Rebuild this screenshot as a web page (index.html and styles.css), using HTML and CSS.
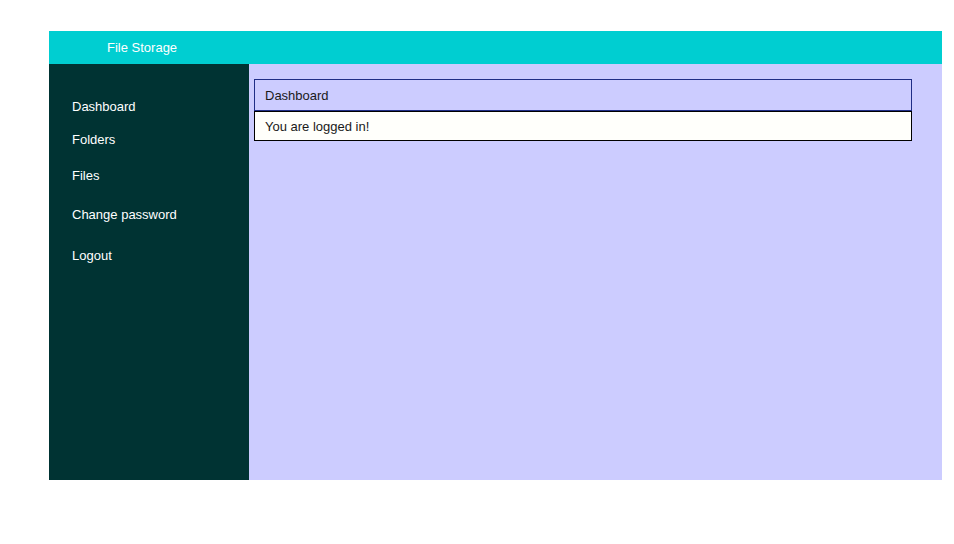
FILE: index.html
```html
<!DOCTYPE html>
<html lang="en">
<head>
<meta charset="utf-8">
<title>File Storage</title>
<link rel="stylesheet" href="styles.css">
</head>
<body>
<div class="app">
  <header class="topbar">File Storage</header>
  <div class="layout">
    <nav class="sidebar">
      <a class="nav-item" href="#">Dashboard</a>
      <a class="nav-item" href="#">Folders</a>
      <a class="nav-item" href="#">Files</a>
      <a class="nav-item" href="#">Change password</a>
      <a class="nav-item" href="#">Logout</a>
    </nav>
    <main class="content">
      <section class="card">
        <div class="card-header">Dashboard</div>
        <div class="card-body">You are logged in!</div>
      </section>
    </main>
  </div>
</div>
</body>
</html>
```

FILE: styles.css
```css
html, body {
  margin: 0;
  padding: 0;
  background: #ffffff;
}
body {
  font-family: "Liberation Sans", Arial, sans-serif;
  font-size: 13px;
}
.app {
  width: 893px;
  margin: 31px 0 0 49px;
}
.topbar {
  height: 33px;
  line-height: 33px;
  padding-left: 58px;
  background: #00ced1;
  color: #ffffff;
}
.layout {
  display: flex;
  height: 416px;
}
.sidebar {
  width: 200px;
  flex: none;
  background: #003333;
  display: flex;
  flex-direction: column;
  padding: 35px 0 0 23px;
  box-sizing: border-box;
}
.nav-item {
  color: #ffffff;
  text-decoration: none;
  line-height: 16px;
}
.nav-item:nth-child(2) { margin-top: 17px; }
.nav-item:nth-child(3) { margin-top: 20px; }
.nav-item:nth-child(4) { margin-top: 23px; }
.nav-item:nth-child(5) { margin-top: 25px; }
.content {
  flex: 1;
  background: #ccccff;
  padding: 15px 30px 0 5px;
}
.card {
  width: 658px;
}
.card-header {
  height: 29px;
  line-height: 29px;
  padding: 1px 0 0 10px;
  border: 1px solid #1f2d86;
  color: #1a1a1a;
}
.card-body {
  height: 27px;
  line-height: 27px;
  padding: 1px 0 0 10px;
  border: 1px solid #000000;
  background: #fffffb;
  color: #1a1a1a;
}
```
